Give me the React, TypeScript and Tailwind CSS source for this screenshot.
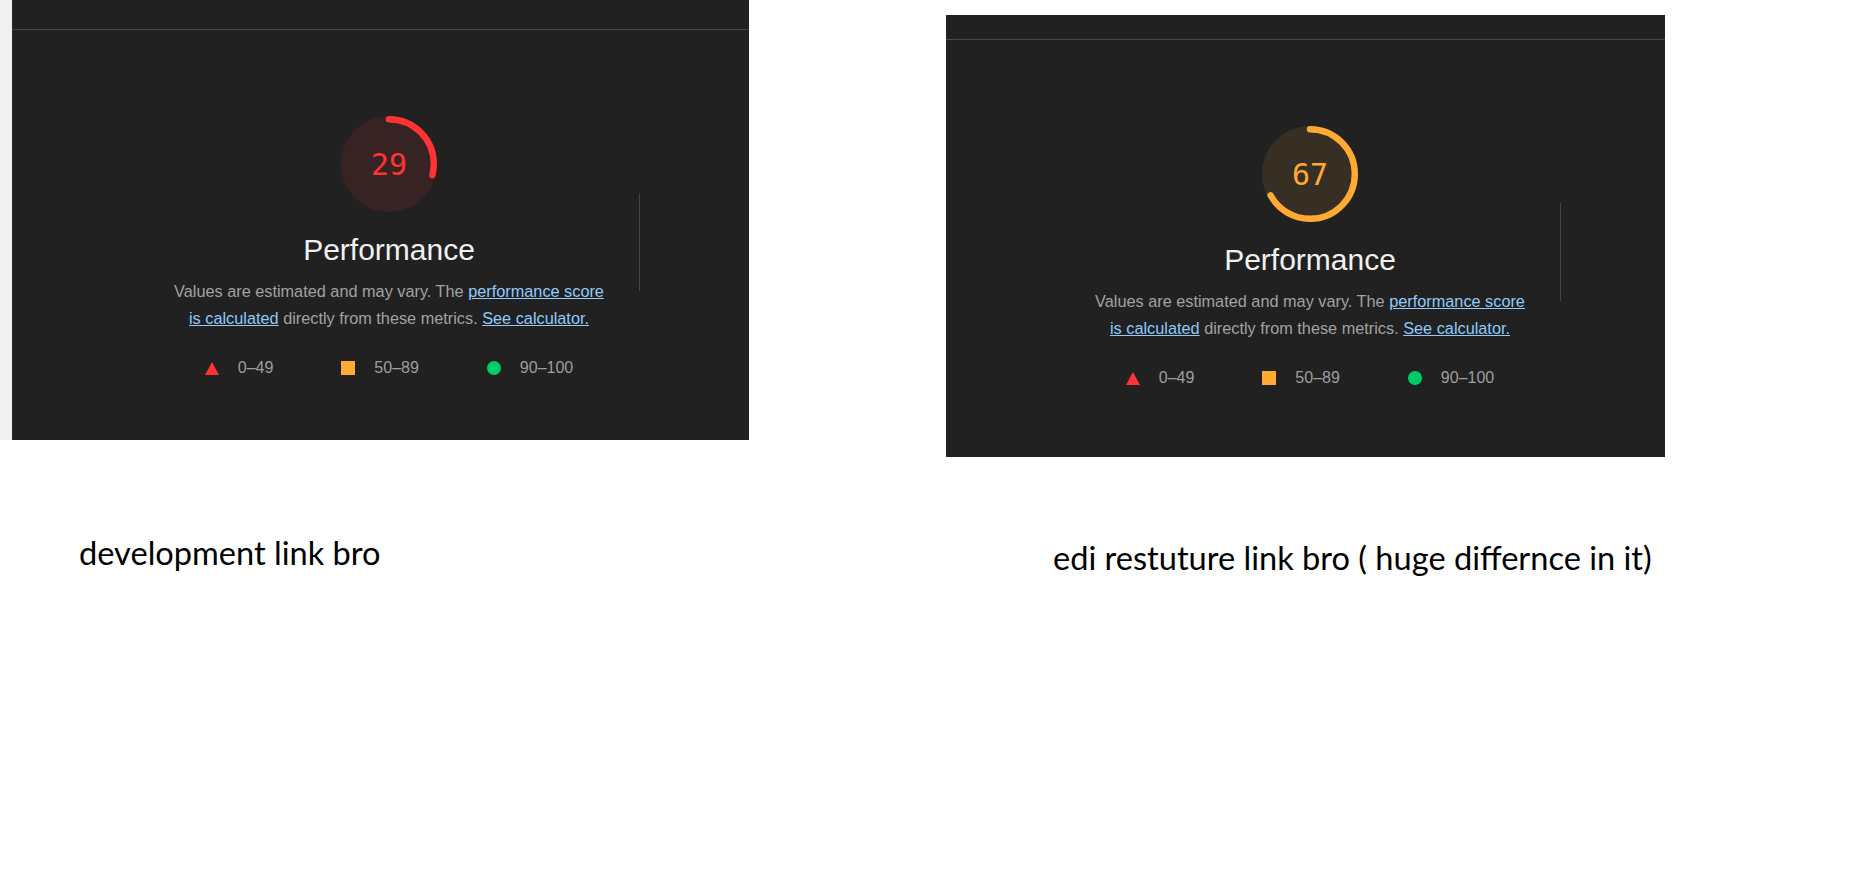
import React from 'react';

type Rating = 'fail' | 'average';

const COLORS: Record<Rating, { stroke: string; base: string; text: string }> = {
  fail: { stroke: '#ff3333', base: '#372323', text: 'text-[#ff3333]' },
  average: { stroke: '#ffaa33', base: '#372f23', text: 'text-[#ffaa33]' },
};

const CIRCUMFERENCE = 2 * Math.PI * 56;

const Gauge: React.FC<{ score: number; rating: Rating }> = ({ score, rating }) => {
  const c = COLORS[rating];
  return (
    <div className="relative w-[96px] h-[96px]">
      <svg viewBox="0 0 120 120" className="w-[96px] h-[96px]">
        <circle cx="60" cy="60" r="56" fill={c.base} stroke={c.base} strokeWidth="8" />
        <circle
          cx="60"
          cy="60"
          r="56"
          fill="none"
          stroke={c.stroke}
          strokeWidth="8"
          strokeLinecap="round"
          transform="rotate(-90 60 60)"
          style={{ strokeDasharray: `${(score / 100) * CIRCUMFERENCE} ${CIRCUMFERENCE}` }}
        />
      </svg>
      <div
        className={`absolute inset-0 flex items-center justify-center font-['DejaVu_Sans_Mono',monospace] text-[30px] ${c.text}`}
      >
        {score}
      </div>
    </div>
  );
};

const Legend: React.FC = () => (
  <div className="flex items-center justify-center gap-[68px] text-[16px] leading-[24px] text-[#9e9e9e]">
    <div className="flex items-center gap-[19px]">
      <svg width="14" height="13" viewBox="0 0 14 13">
        <polygon points="7,0 14,13 0,13" fill="#ff3333" />
      </svg>
      <span>0–49</span>
    </div>
    <div className="flex items-center gap-[19px]">
      <span className="block w-[14px] h-[14px] bg-[#ffaa33]" />
      <span>50–89</span>
    </div>
    <div className="flex items-center gap-[19px]">
      <span className="block w-[14px] h-[14px] rounded-full bg-[#00cc66]" />
      <span>90–100</span>
    </div>
  </div>
);

const PerfHeader: React.FC<{ score: number; rating: Rating }> = ({ score, rating }) => (
  <div className="flex flex-col items-center w-[500px] pt-[86px]">
    <Gauge score={score} rating={rating} />
    <h2 className="mt-[20px] text-[30px] leading-[36px] text-[#f1f1f1]">Performance</h2>
    <p className="mt-[10px] w-[444px] text-center text-[16.3px] leading-[27px] text-[#a1a1a1]">
      Values are estimated and may vary. The{' '}
      <a className="text-[#90caf9] underline">performance score is calculated</a> directly from
      these metrics. <a className="text-[#90caf9] underline">See calculator.</a>
    </p>
    <div className="mt-[24px]">
      <Legend />
    </div>
  </div>
);

const Panel: React.FC<{
  score: number;
  rating: Rating;
  topHeight: string;
  padLeft: string;
  className: string;
}> = ({ score, rating, topHeight, padLeft, className }) => (
  <div className={`bg-[#212121] flex flex-col ${className}`}>
    <div className={`${topHeight} border-b border-[#474747] shrink-0`} />
    <div className={`flex items-start ${padLeft}`}>
      <PerfHeader score={score} rating={rating} />
      <div className="w-px h-[98px] mt-[163px] bg-[#454545]" />
    </div>
  </div>
);

export default function App() {
  return (
    <div className="w-[1876px] h-[885px] bg-white font-['Liberation_Sans',Arial,sans-serif] overflow-hidden">
      <div className="flex items-start">
        {/* development */}
        <div className="flex flex-col w-[749px]">
          <div className="flex h-[440px]">
            <div className="w-[13px] bg-[#f0f0f0] border-r border-[#2a2a2a]" />
            <Panel
              score={29}
              rating="fail"
              topHeight="h-[30px]"
              padLeft="pl-[126px]"
              className="flex-1"
            />
          </div>
          <p className="mt-[93px] pl-[79px] font-['Lato',sans-serif] text-[32.6px] leading-[40px] text-black whitespace-nowrap">
            development link bro
          </p>
        </div>

        {/* edi restuture */}
        <div className="flex flex-col ml-[197px] mt-[15px]">
          <Panel
            score={67}
            rating="average"
            topHeight="h-[25px]"
            padLeft="pl-[114px]"
            className="w-[719px] h-[442px]"
          />
          <p className="mt-[81px] pl-[107px] font-['Lato',sans-serif] text-[32.6px] leading-[40px] text-black whitespace-nowrap">
            edi restuture link bro ( huge differnce in it)
          </p>
        </div>
      </div>
    </div>
  );
}
